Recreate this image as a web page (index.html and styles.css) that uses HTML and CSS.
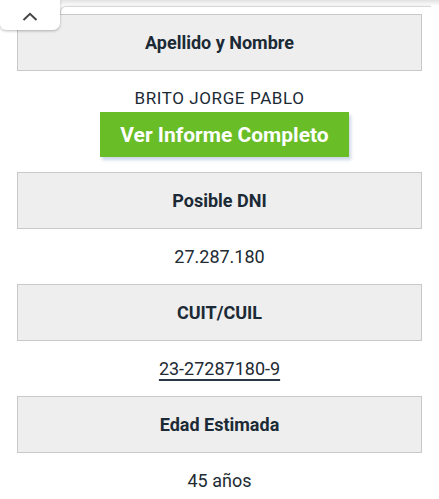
FILE: index.html
```html
<!DOCTYPE html>
<html lang="es">
<head>
<meta charset="utf-8">
<title>Informe</title>
<link rel="stylesheet" href="styles.css">
</head>
<body>
<div class="topbar">
  <div class="sheet"></div>
  <button class="tab" aria-label="Subir">
    <svg width="16" height="9" viewBox="0 0 16 9"><path d="M1.5 8 L8 1.8 L14.5 8" fill="none" stroke="#454545" stroke-width="2"/></svg>
  </button>
</div>
<main class="content">
  <div class="label">Apellido y Nombre</div>
  <div class="name-block">
    <div class="name">BRITO JORGE PABLO</div>
    <a class="cta" href="#">Ver Informe Completo</a>
  </div>
  <div class="label">Posible DNI</div>
  <div class="value">27.287.180</div>
  <div class="label">CUIT/CUIL</div>
  <div class="value"><a class="link" href="#">23-27287180-9</a></div>
  <div class="label">Edad Estimada</div>
  <div class="value">45 años</div>
</main>
</body>
</html>
```

FILE: styles.css
```css
* { box-sizing: border-box; }
html, body {
  margin: 0;
  padding: 0;
  background: #fff;
  font-family: Roboto, "Liberation Sans", Arial, sans-serif;
  color: #1f2a33;
}
.topbar {
  position: relative;
  height: 14px;
  background: linear-gradient(#e2e2e2, #f0f0f0 3px, #fbfbfb 5px, #fff 6px);
  padding-top: 6px;
  padding-left: 60px;
  padding-right: 8px;
}
.sheet {
  height: 8px;
  background: #fff;
  border-top: 1px solid #d8d8d8;
  border-left: 1px solid #d8d8d8;
  border-top-left-radius: 6px;
  box-shadow: 0 -1px 2px rgba(0,0,0,0.06);
}
.tab {
  position: absolute;
  left: 0;
  top: 0;
  width: 60px;
  height: 30px;
  border: none;
  padding: 0;
  background: #fff;
  border-radius: 0 0 7px 6px;
  box-shadow: 0 1px 3px rgba(0,0,0,0.28);
  display: flex;
  align-items: center;
  justify-content: center;
  padding-top: 2px;
}
.content {
  display: flex;
  flex-direction: column;
  align-items: center;
}
.label {
  width: 405px;
  height: 57px;
  margin-left: 17px;
  margin-right: 17px;
  align-self: flex-start;
  background: #eeeeee;
  border: 1px solid #c8c8c8;
  display: flex;
  align-items: center;
  justify-content: center;
  font-weight: 700;
  font-size: 18px;
  line-height: 22px;
  color: #1b2a35;
}
.name-block {
  display: flex;
  flex-direction: column;
  align-items: center;
  padding-top: 17px;
  padding-bottom: 15px;
}
.name {
  font-size: 17px;
  letter-spacing: 0.6px;
  line-height: 20px;
  color: #1b2a35;
  margin-bottom: 4px;
}
.cta {
  width: 249px;
  height: 45px;
  margin-left: 10px;
  background: #69bd26;
  color: #fff;
  text-decoration: none;
  font-weight: 700;
  font-size: 21px;
  display: flex;
  align-items: center;
  justify-content: center;
  box-shadow: 2px 3px 3px rgba(110, 140, 190, 0.35);
}
.value {
  height: 55px;
  display: flex;
  align-items: center;
  justify-content: center;
  font-size: 18px;
  line-height: 22px;
  color: #222b33;
}
.link {
  color: #222b33;
  text-decoration: underline;
  text-decoration-thickness: 1.5px;
  text-underline-offset: 4px;
  text-decoration-color: #2a3845;
}
```
